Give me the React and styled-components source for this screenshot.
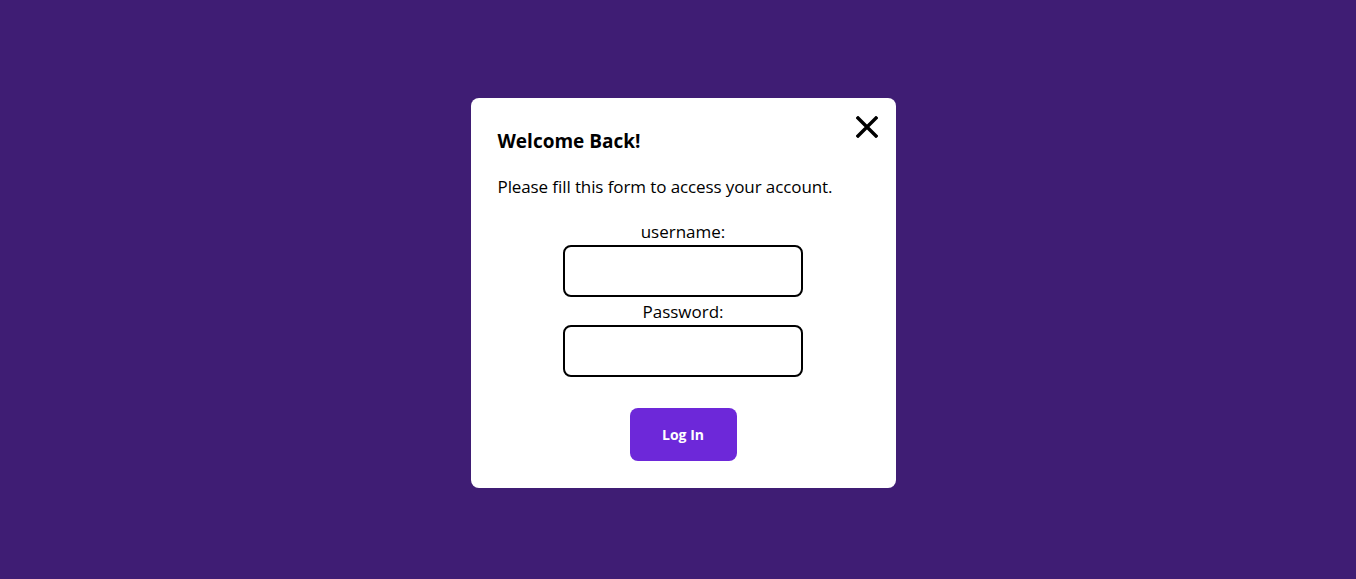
import React from 'react';
import styled, { createGlobalStyle } from 'styled-components';

const GlobalStyle = createGlobalStyle`
  html, body {
    margin: 0;
    padding: 0;
    background: #3f1d74;
    overflow: hidden;
  }
  body {
    font-family: 'Open Sans', 'Noto Sans', sans-serif;
  }
`;

const Overlay = styled.div`
  position: fixed;
  inset: 0;
  padding: 7px 0 0 10px;
  display: flex;
  align-items: center;
  justify-content: center;
`;

const Modal = styled.div`
  position: relative;
  width: 425px;
  box-sizing: border-box;
  padding: 31px 27px 27px;
  background: #fff;
  border-radius: 8px;
  color: #000;
`;

const CloseButton = styled.button`
  position: absolute;
  top: 18px;
  right: 18px;
  width: 22px;
  height: 22px;
  padding: 0;
  border: none;
  background: none;
  cursor: pointer;
  display: flex;
`;

const Title = styled.h2`
  margin: 0;
  font-size: 19px;
  line-height: 24px;
  font-weight: 700;
`;

const Intro = styled.p`
  margin: 22px 0 0;
  font-size: 17px;
  line-height: 24px;
  letter-spacing: -0.1px;
`;

const Form = styled.form`
  margin-top: 21px;
  display: flex;
  flex-direction: column;
  align-items: center;
  gap: 3px;
`;

const Field = styled.div`
  display: flex;
  flex-direction: column;
  align-items: center;
`;

const Label = styled.label`
  font-size: 17px;
  line-height: 24px;
`;

const Input = styled.input`
  margin-top: 1px;
  width: 240px;
  height: 52px;
  box-sizing: border-box;
  border: 2px solid #000;
  border-radius: 8px;
  font-size: 16px;
  padding: 0 10px;
  outline: none;
`;

const Submit = styled.button`
  margin-top: 28px;
  width: 107px;
  height: 53px;
  border: none;
  border-radius: 8px;
  background: #6d28d9;
  color: #fff;
  font-family: inherit;
  font-size: 14px;
  font-weight: 700;
  cursor: pointer;
`;

const CloseIcon = () => (
  <svg width="22" height="22" viewBox="0 0 22 22">
    <path d="M2 2 L20 20 M20 2 L2 20" stroke="#000" strokeWidth="3.4" strokeLinecap="square" />
  </svg>
);

export default function App() {
  return (
    <>
      <GlobalStyle />
      <Overlay>
        <Modal>
          <CloseButton aria-label="Close">
            <CloseIcon />
          </CloseButton>
          <Title>Welcome Back!</Title>
          <Intro>Please fill this form to access your account.</Intro>
          <Form onSubmit={(e) => e.preventDefault()}>
            <Field>
              <Label htmlFor="username">username:</Label>
              <Input id="username" type="text" />
            </Field>
            <Field>
              <Label htmlFor="password">Password:</Label>
              <Input id="password" type="password" />
            </Field>
            <Submit type="submit">Log In</Submit>
          </Form>
        </Modal>
      </Overlay>
    </>
  );
}
